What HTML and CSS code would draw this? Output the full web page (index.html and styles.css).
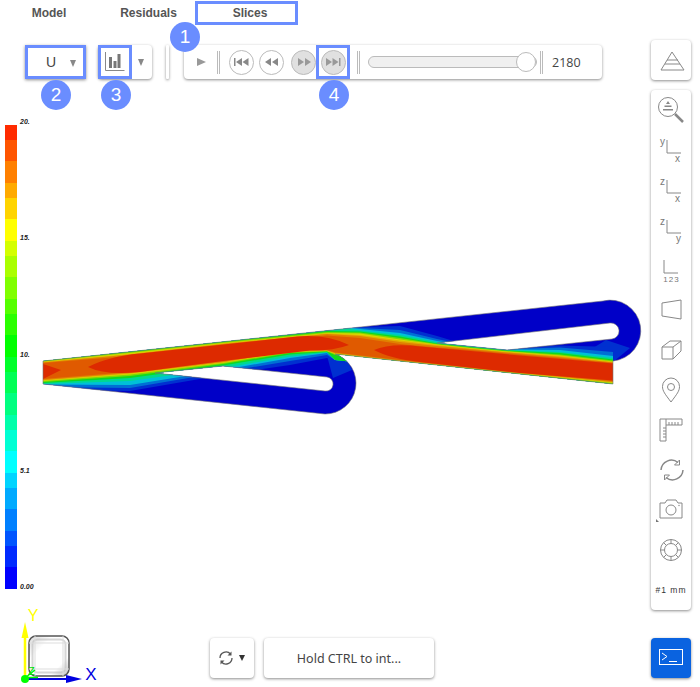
FILE: index.html
```html
<!DOCTYPE html>
<html lang="en">
<head>
<meta charset="utf-8">
<title>Slices</title>
<link rel="stylesheet" href="styles.css">
</head>
<body>
<div class="app">
  <div class="left">
    <nav class="tabs">
      <div class="tab tab-model">Model</div>
      <div class="tab tab-residuals">Residuals</div>
      <div class="tab tab-slices">Slices<span class="badge badge-1">1</span></div>
    </nav>
    <div class="toolbar">
      <div class="card select hl">
        <span class="select-value">U</span><span class="caret"></span>
        <span class="badge badge-2">2</span>
      </div>
      <div class="card chart">
        <div class="chart-btn hl">
          <svg class="ico-chart" viewBox="0 0 20 20" width="20" height="20"><path d="M.5 0V18.500H19.500" fill="none" stroke="#888"/><path d="M4 5h3v11H4zM8.500 9h3v7h-3zM12.500 2h3v14h-3z" fill="#777"/></svg>
          <span class="badge badge-3">3</span>
        </div>
        <span class="caret caret-chart"></span>
      </div>
      <div class="card sep"></div>
      <div class="card player">
        <span class="play"></span>
        <span class="dbl dbl-a"></span>
        <button class="round"><svg viewBox="0 0 16 8" width="16" height="8"><path d="M0 0h1.500v8H0zM2 4l6-4v8zM8.500 4l6-4v8z" fill="#888"/></svg></button>
        <button class="round"><svg viewBox="0 0 14 8" width="14" height="8"><path d="M0 4l6-4v8zM7 4l6-4v8z" fill="#888"/></svg></button>
        <button class="round on"><svg viewBox="0 0 14 8" width="14" height="8"><path d="M1 0l6 4-6 4zM8 0l6 4-6 4z" fill="#999"/></svg></button>
        <div class="next hl">
          <button class="round on"><svg viewBox="0 0 16 8" width="16" height="8"><path d="M1 0l6 4-6 4zM7.500 0l6 4-6 4zM14 0h1.500v8H14z" fill="#999"/></svg></button>
          <span class="badge badge-4">4</span>
        </div>
        <span class="dbl dbl-b"></span>
        <div class="slider"><span class="knob"></span></div>
        <span class="dbl dbl-c"></span>
        <span class="count">2180</span>
      </div>
    </div>
    <div class="viewport">
      <div class="legend">
        <div class="legend-bar"></div>
        <div class="legend-labels"><span>20.</span><span>15.</span><span>10.</span><span>5.1</span><span>0.00</span></div>
      </div>
      <svg class="mesh" viewBox="0 290 650 130" width="650" height="130">
        <defs>
          <clipPath id="sil"><path clip-rule="evenodd" d="M43,361 L603,301 A30.500,30.500 0 1 1 613,361 L613,384 L335,354 A30.800,30.800 0 0 1 325,414 L43,384 Z M155,373 L223,366 L327,377 A7,7 0 0 1 325,391 Z M437,343 L610,323 A8,8 0 0 1 612,339 L507,350 Z"/></clipPath>
        </defs>
        <g clip-path="url(#sil)">
          <rect x="30" y="290" width="620" height="130" fill="#0000c8"/>
          <path d="M326,352 L345,356 L352,370 L333,378 Z" fill="#0030d0"/>
          <path d="M606,340 L630,348 L613,362 L590,350 Z" fill="#0030d0"/>
          <polygon class="l-mb" points="43,355 130,345 223,335 327,325 360,327 400,326 437,336 470,346 507,348 560,345.500 613,347 613,390 500,378 400,367 335,360 327,358 290,365 223,375 130,391 43,390"/>
          <polygon class="l-lb" points="43,355 130,345 223,335 327,325 360,328 400,330 437,339 470,346 507,349 560,347.500 613,352 613,390 500,378 400,367 335,360 327,355 290,361 223,372 130,388 43,387"/>
          <polygon class="l-cy" points="43,355 130,345 223,335 327,325 360,329 400,333 437,341 470,346 507,349.500 560,350 613,356 613,390 500,378 400,367 335,360 327,353 290,358 223,370 130,385 43,384.500"/>
          <polygon class="l-te" points="43,355 130,345 223,335 327,325 360,330.500 400,335 437,342 470,346 507,350 560,352 613,358 613,390 500,378 400,367 335,360 327,352.500 290,356.500 223,368 130,381 43,384"/>
          <polygon class="l-gr" points="43,355 130,345 223,341 327,331 360,331.500 400,336.500 437,343.500 470,347 507,350.500 560,353 613,359.500 613,390 500,378 400,367 335,360 327,352 290,354.500 223,365.500 130,378 43,383"/>
          <polygon class="l-li" points="43,360 130,352 223,342 327,332 360,332.500 400,338 437,344 470,347.500 507,351 560,354.500 613,360.500 613,384.500 500,373 400,362 335,355 327,351.500 290,353 223,364 130,376 43,382"/>
          <polygon class="l-ye" points="43,361.500 130,353 223,343 327,333 360,333.500 400,339.500 437,344.500 470,348 507,351.500 560,355.500 613,361.500 613,383 500,371.500 400,361 335,354 327,351 290,352 223,363 130,374.500 43,381"/>
          <polygon class="l-am" points="43,362 130,354 223,343.500 327,333.500 360,335 400,340.500 437,345 470,348.500 507,352 560,356 613,362 613,382.500 500,371.200 400,360.700 335,353.500 327,350.700 290,351.500 223,362.500 130,373.800 43,380.500"/>
          <polygon class="l-or" points="43,362.500 130,354.500 223,344 327,334 360,336 400,342 437,346 470,349 507,352.500 560,357 613,362.500 613,382 500,371 400,360.500 335,353 327,350.500 290,351 223,362 130,373 43,380"/>
          <polygon class="l-da" points="43,363 130,356 223,345 327,335.500 360,338 400,344 437,347.500 470,350 507,353.500 560,358 613,363 613,381 500,370.500 400,360 335,352.500 327,350 290,350 223,361 130,372 43,379"/>
          <path class="red" d="M43,364 L61,370 L43,379 Z"/>
          <path class="red" d="M88,367 Q108,356.500 140,353.500 L297,336.500 Q327,334 349,345 Q335,350.500 310,350.500 L223,361 L140,372 Q105,375.500 88,367 Z"/>
          <path class="red" d="M374,350 Q390,343 420,346.500 L520,355.500 L613,363.500 L613,380.500 L520,373 L420,362 Q390,358.500 374,350 Z"/>
        </g>
        <path class="edge" d="M43,361 L603,301 A30.500,30.500 0 1 1 613,361 L613,384 L335,354 A30.800,30.800 0 0 1 325,414 L43,384 Z M155,373 L223,366 L327,377 A7,7 0 0 1 325,391 Z M437,343 L610,323 A8,8 0 0 1 612,339 L507,350 Z"/>
      </svg>
    </div>
    <div class="bottom">
      <svg class="triad" viewBox="0 605 110 82" width="110" height="82">
        <defs>
          <linearGradient id="cubeShade" x1="0" y1="0" x2="1" y2="1"><stop offset="0" stop-color="#d8d8d8"/><stop offset=".3" stop-color="#fff"/><stop offset=".75" stop-color="#fff"/><stop offset="1" stop-color="#bbb"/></linearGradient>
        </defs>
        <rect x="29" y="636" width="40" height="40" rx="7" fill="url(#cubeShade)" stroke="#555" stroke-width="1.500"/>
        <rect x="32.500" y="639.500" width="33" height="33" rx="5" fill="none" stroke="#bbb" stroke-width="2" opacity=".6"/>
        <path d="M29 643H69M29 669H69M35 636V676M63 636V676" stroke="#ddd" fill="none"/>
        <path d="M25 679V632" stroke="#ff0" stroke-width="2.500"/>
        <path d="M25 622l3.500 16h-7z" fill="#ff0"/>
        <path d="M25 679H68" stroke="#0000e0" stroke-width="2"/>
        <path d="M66 675l16 4-16 4z" fill="#0000e0"/>
        <path d="M25 678L35 670M25 677.500H38" stroke="#00ff00" stroke-width="1.500"/>
        <circle cx="25" cy="679" r="4" fill="#00ff00"/>
        <text class="t-y" x="33" y="621">Y</text>
        <text class="t-x" x="91" y="680">X</text>
        <text class="t-z" x="28" y="675">Z</text>
      </svg>
      <div class="card refresh">
        <svg viewBox="0 0 16 14" width="16" height="14"><path d="M2 7a6 6 0 0 1 10.500-4M14 7a6 6 0 0 1-10.500 4" fill="none" stroke="#555" stroke-width="1.300"/><path d="M13.500 .5v4h-4zM2.500 13.500v-4h4z" fill="#555"/></svg>
        <span class="caret-dark"></span>
      </div>
      <div class="card hold">Hold CTRL to int...</div>
    </div>
  </div>
  <aside class="rail">
    <div class="card rail-btn">
      <svg viewBox="0 0 40 40" width="40" height="40"><path d="M21 12L33 30H10ZM16 20H27M14 24H29" class="ln"/></svg>
    </div>
    <div class="card rail-tools">
      <svg class="cell" viewBox="0 0 40 40"><circle cx="17" cy="17" r="9.500" class="ln"/><path d="M24 24L32 32" stroke="#888" stroke-width="2.500"/><path d="M17 11l2 3h-4zM13.500 15.500h7v1.500h-7zM12 19h10v1.500H12z" fill="#888"/></svg>
      <svg class="cell" viewBox="0 0 40 40"><path d="M16 10V23H30" class="ln"/><text class="ax" x="9" y="15">y</text><text class="ax" x="24" y="32">x</text></svg>
      <svg class="cell" viewBox="0 0 40 40"><path d="M16 10V23H30" class="ln"/><text class="ax" x="9" y="15">z</text><text class="ax" x="24" y="32">x</text></svg>
      <svg class="cell" viewBox="0 0 40 40"><path d="M16 10V23H30" class="ln"/><text class="ax" x="9" y="15">z</text><text class="ax" x="25" y="32">y</text></svg>
      <svg class="cell" viewBox="0 0 40 40"><path d="M13 10V23H27" class="ln"/><text class="nums" x="20.500" y="32">123</text></svg>
      <svg class="cell" viewBox="0 0 40 40"><path d="M11 13L30 10V29L11 26Z" class="ln"/></svg>
      <svg class="cell" viewBox="0 0 40 40"><path d="M11 17H22V29H11ZM11 17L19 11H30L22 17M30 11V21L22 29" class="ln"/></svg>
      <svg class="cell" viewBox="0 0 40 40"><path d="M20 32C14 24 11.500 21 11.500 16.500A8.500 8.500 0 0 1 28.500 16.500C28.500 21 26 24 20 32Z" class="ln"/><circle cx="20" cy="17" r="3.500" class="ln"/></svg>
      <svg class="cell" viewBox="0 0 40 40"><path d="M9 9H31V15H15V31H9ZM15 9V15" class="ln"/><path d="M18 12V15M21 12V15M24 12V15M27 12V15M12 18H15M12 21H15M12 24H15M12 27H15" class="ln"/></svg>
      <svg class="cell" viewBox="0 0 40 40"><path d="M10 20A10.500 10.500 0 0 1 27 12.500M32 20A10.500 10.500 0 0 1 15 27.500" class="ln2"/><path d="M28.500 10V15H23.500ZM13.500 30V25H18.500Z" class="ln"/></svg>
      <svg class="cell" viewBox="0 0 40 40"><path d="M9 13H14L16 10H25L27 13H31V28H9Z" class="ln"/><circle cx="20" cy="20" r="5" class="ln"/><circle cx="28" cy="15.500" r=".7" fill="#888"/><path d="M5 29V32H8Z" fill="#777"/></svg>
      <svg class="cell" viewBox="0 0 40 40"><circle cx="20" cy="20" r="10.500" class="ln"/><circle cx="20" cy="20" r="6.500" class="ln"/><path d="M20 9.500V13.500M20 26.500V30.500M9.500 20H13.500M26.500 20H30.500M12.600 12.600L15.400 15.400M24.600 24.600L27.400 27.400M27.400 12.600L24.600 15.400M15.400 24.600L12.600 27.400" class="ln"/></svg>
      <div class="cell scale">#1 mm</div>
    </div>
    <div class="card terminal">
      <svg viewBox="0 0 40 40" width="40" height="40"><rect x="8.500" y="11.500" width="23" height="15" fill="none" stroke="#fff"/><path d="M11 15L16 18.500L11 22M18 23.500H26" fill="none" stroke="#fff"/></svg>
    </div>
  </aside>
</div>
</body>
</html>
```

FILE: styles.css
```css
* { box-sizing: border-box; }
html, body { margin: 0; padding: 0; background: #fff; }
body { font-family: "Liberation Sans", Arial, sans-serif; }

.app { display: flex; width: 700px; height: 687px; overflow: hidden; }
.left { width: 651px; display: flex; flex-direction: column; }

/* tabs */
.tabs { display: flex; height: 25px; padding-top: 1px; font-size: 12px; font-weight: bold; color: #555; }
.tab { display: flex; align-items: center; justify-content: center; height: 24px; }
.tab-model { width: 98px; }
.tab-residuals { width: 97px; padding-left: 4px; }
.tab-slices { width: 103px; border: 3px solid #6a8dff; padding-left: 7px; position: relative; }

/* badges */
.badge { position: absolute; width: 30px; height: 30px; border-radius: 50%; background: #6a8dff; color: #fff; font: 19px/30px "Liberation Sans", Arial, sans-serif; text-align: center; z-index: 3; }
.badge-1 { left: -28px; top: 18px; }
.badge-2 { left: 13px; top: 32px; }
.badge-3 { left: 0; top: 32px; }
.badge-4 { left: 0; top: 32px; }

/* cards */
.card { background: #fff; border-radius: 4px; box-shadow: 0 1px 3px rgba(0, 0, 0, .45); }
.hl { border: 3px solid #6a8dff; }

/* toolbar */
.toolbar { display: flex; align-items: stretch; height: 34px; margin: 20px 0 0 25px; }
.select { position: relative; width: 61px; border-radius: 0; display: flex; align-items: center; }
.select-value { font-size: 14px; color: #444; margin-left: 18px; width: 24px; }
.caret { width: 0; height: 0; border-left: 3.500px solid transparent; border-right: 3.500px solid transparent; border-top: 7px solid #888; margin-left: 0; margin-top: 2px; }
.chart { display: flex; align-items: center; width: 54px; margin-left: 12px; }
.chart-btn { position: relative; width: 34px; height: 34px; display: flex; align-items: center; justify-content: center; }
.caret-chart { margin-left: 6px; margin-top: 0; }
.sep { width: 3px; margin-left: 14px; border-radius: 1px; }
.player { display: flex; align-items: center; width: 418px; margin-left: 15px; }
.play { width: 0; height: 0; border-left: 9px solid #999; border-top: 4.500px solid transparent; border-bottom: 4.500px solid transparent; margin-left: 13px; }
.dbl { width: 3px; height: 23px; border-left: 1px solid #bbb; border-right: 1px solid #bbb; }
.dbl-a { margin-left: 11px; }
.round { width: 25px; height: 25px; border-radius: 50%; border: 1px solid #bbb; background: #fff; padding: 0; display: flex; align-items: center; justify-content: center; }
.round.on { background: #e0e0e0; }
.dbl-a + .round { margin-left: 9px; }
.round + .round { margin-left: 5px; }
.round + .round + .round { margin-left: 7px; }
.next { position: relative; width: 34px; height: 34px; margin-left: 0; display: flex; align-items: center; justify-content: center; }
.dbl-b { margin-left: 7px; }
.slider { position: relative; width: 169px; height: 12px; margin-left: 8px; margin-right: 0; background: #f0f0f0; border: 1px solid #bbb; border-radius: 6px; }
.knob { position: absolute; right: 0; top: -5px; width: 20px; height: 20px; border-radius: 50%; background: #fff; border: 1px solid #bbb; }
.dbl-c { margin-left: 3px; }
.count { font: 500 12.500px "Open Sans", sans-serif; color: #444; margin-left: 9px; }

/* viewport */
.viewport { position: relative; flex: 1; }
.legend { display: flex; margin: 46px 0 0 5px; }
.legend-bar { width: 12px; height: 464px; background: linear-gradient(to bottom,
  #ff2b00 0 15px, #ff5500 15px 36px, #ff8000 36px 58px, #ffaa00 58px 73px, #ffd400 73px 94px,
  #ffff00 94px 116px, #d4ff00 116px 131px, #aaff00 131px 152px, #80ff00 152px 174px, #55ff00 174px 189px,
  #2aff00 189px 210px, #00ff00 210px 232px, #00ff2a 232px 247px, #00ff55 247px 268px, #00ff80 268px 290px,
  #00ffaa 290px 305px, #00ffd4 305px 326px, #00ffff 326px 348px, #00d4ff 348px 363px, #00aaff 363px 384px,
  #0080ff 384px 406px, #0055ff 406px 421px, #002aff 421px 442px, #0000ff 442px 464px); }
.legend-labels { display: flex; flex-direction: column; justify-content: space-between; height: 473px; margin: -7px 0 0 3px; font-size: 7px; line-height: 8px; font-style: italic; font-weight: bold; color: #222; }
.mesh { position: absolute; left: 0; top: 211px; }
.l-mb { fill: #0030d0; }
.l-lb { fill: #0070d4; }
.l-cy { fill: #00c0d8; }
.l-te { fill: #00d890; }
.l-gr { fill: #10d820; }
.l-li { fill: #80d800; }
.l-ye { fill: #d8d800; }
.l-am { fill: #e0b000; }
.l-or { fill: #e08000; }
.l-da { fill: #e05a00; }
.red { fill: #dd2a00; }
.edge { fill: none; stroke: #777; stroke-width: .6px; }

/* bottom */
.bottom { display: flex; align-items: flex-start; height: 82px; }
.triad { flex: none; }
.t-y { font-size: 16px; fill: #ffff00; text-anchor: middle; }
.t-x { font-size: 17px; fill: #0000e0; text-anchor: middle; }
.t-z { font-size: 11px; fill: #00e000; }
.refresh { display: flex; align-items: center; justify-content: center; gap: 5px; width: 44px; height: 40px; margin: 33px 0 0 100px; padding-right: 2px; }
.caret-dark { width: 0; height: 0; border-left: 3px solid transparent; border-right: 3px solid transparent; border-top: 6px solid #333; }
.hold { width: 170px; height: 40px; margin: 33px 0 0 10px; display: flex; align-items: center; justify-content: center; font: 12.500px "Noto Sans", sans-serif; color: #444; }

/* right rail */
.rail { width: 40px; display: flex; flex-direction: column; padding-top: 40px; }
.rail-btn { width: 40px; height: 40px; }
.rail-btn svg, .terminal svg { display: block; }
.rail-tools { width: 40px; height: 520px; margin-top: 10px; display: flex; flex-direction: column; }
.cell { width: 40px; height: 40px; flex: none; display: block; }
.ln { fill: none; stroke: #888; stroke-width: 1px; }
.ln2 { fill: none; stroke: #888; stroke-width: 1.500px; }
.ax { font: 10px "Liberation Sans", sans-serif; fill: #777; }
.nums { font: 8px "Liberation Sans", sans-serif; fill: #777; text-anchor: middle; letter-spacing: 1px; }
.scale { font: 8.500px/40px "Liberation Sans", sans-serif; color: #333; text-align: center; letter-spacing: 1px; white-space: nowrap; }
.terminal { width: 40px; height: 40px; margin-top: 28px; background: #0a63e0; }
```
